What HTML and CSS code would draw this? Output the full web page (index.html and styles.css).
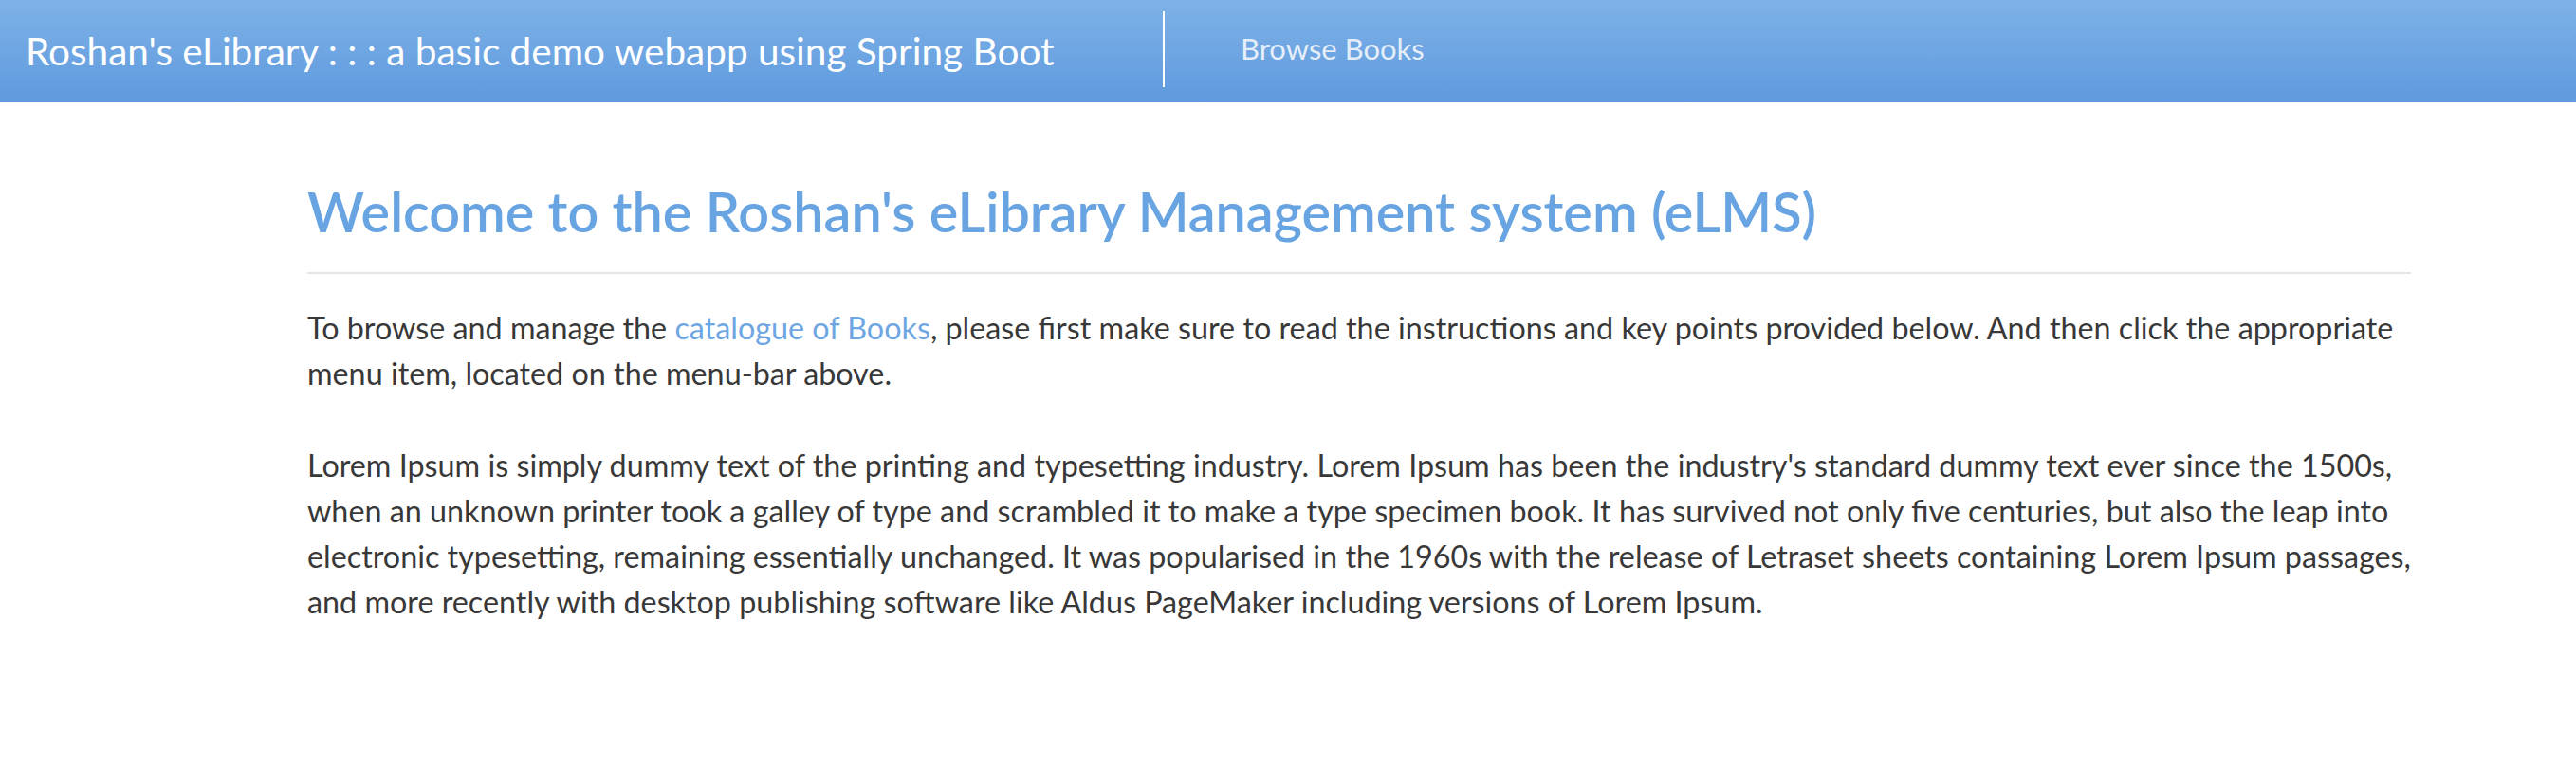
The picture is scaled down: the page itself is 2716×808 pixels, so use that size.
FILE: index.html
```html
<!DOCTYPE html>
<html lang="en">
<head>
<meta charset="utf-8">
<title>Roshan's eLibrary</title>
<link rel="stylesheet" href="styles.css">
</head>
<body>
<header class="navbar">
  <a class="brand" href="#">Roshan's eLibrary : : : a basic demo webapp using Spring Boot</a>
  <nav class="nav">
    <a class="nav-link" href="#">Browse Books</a>
  </nav>
</header>
<main class="content">
  <h3 class="page-title">Welcome to the Roshan's eLibrary Management system (eLMS)</h3>
  <p class="intro">To browse and manage the <a class="link" href="#">catalogue of Books</a>, please first make sure to read the instructions and key points provided below. And then click the appropriate menu item, located on the menu-bar above.</p>
  <p class="lorem">Lorem Ipsum is simply dummy text of the printing and typesetting industry. Lorem Ipsum has been the industry's standard dummy text ever since the 1500s, when an unknown printer took a galley of type and scrambled it to make a type specimen book. It has survived not only five centuries, but also the leap into electronic typesetting, remaining essentially unchanged. It was popularised in the 1960s with the release of Letraset sheets containing Lorem Ipsum passages, and more recently with desktop publishing software like Aldus PageMaker including versions of Lorem Ipsum.</p>
</main>
</body>
</html>
```
FILE: styles.css
```css
html, body {
  margin: 0;
  padding: 0;
  background: #ffffff;
}

body {
  font-family: "Lato", "Open Sans", sans-serif;
  color: #383838;
}

.navbar {
  display: flex;
  align-items: stretch;
  height: 108px;
  background: linear-gradient(to bottom, #7eb2e7 0%, #5f9ade 100%);
}

.brand {
  flex: 0 0 1226px;
  box-sizing: border-box;
  padding-left: 27px;
  display: flex;
  align-items: center;
  font-size: 40.5px;
  color: #ffffff;
  text-decoration: none;
  white-space: nowrap;
  padding-bottom: 1px;
}

.nav {
  display: flex;
  align-items: center;
  margin: 12px 0 16px;
  border-left: 2px solid #ffffff;
  padding-left: 80px;
}

.nav-link {
  font-size: 31px;
  color: rgba(255, 255, 255, 0.84);
  text-decoration: none;
  padding-bottom: 2px;
}

.content {
  padding: 0 174px 0 324px;
}

.page-title {
  margin: 83px 0 0;
  padding-bottom: 33px;
  border-bottom: 2px solid #e5e5e5;
  font-size: 57.5px;
  font-weight: 600;
  line-height: 63px;
  color: #68a4e2;
}

.intro,
.lorem {
  font-size: 32.3px;
  line-height: 48px;
}

.intro {
  margin: 33px 0 0;
}

.lorem {
  margin: 49px 0 0;
}

.link {
  color: #6ea6e3;
  text-decoration: none;
}
```
